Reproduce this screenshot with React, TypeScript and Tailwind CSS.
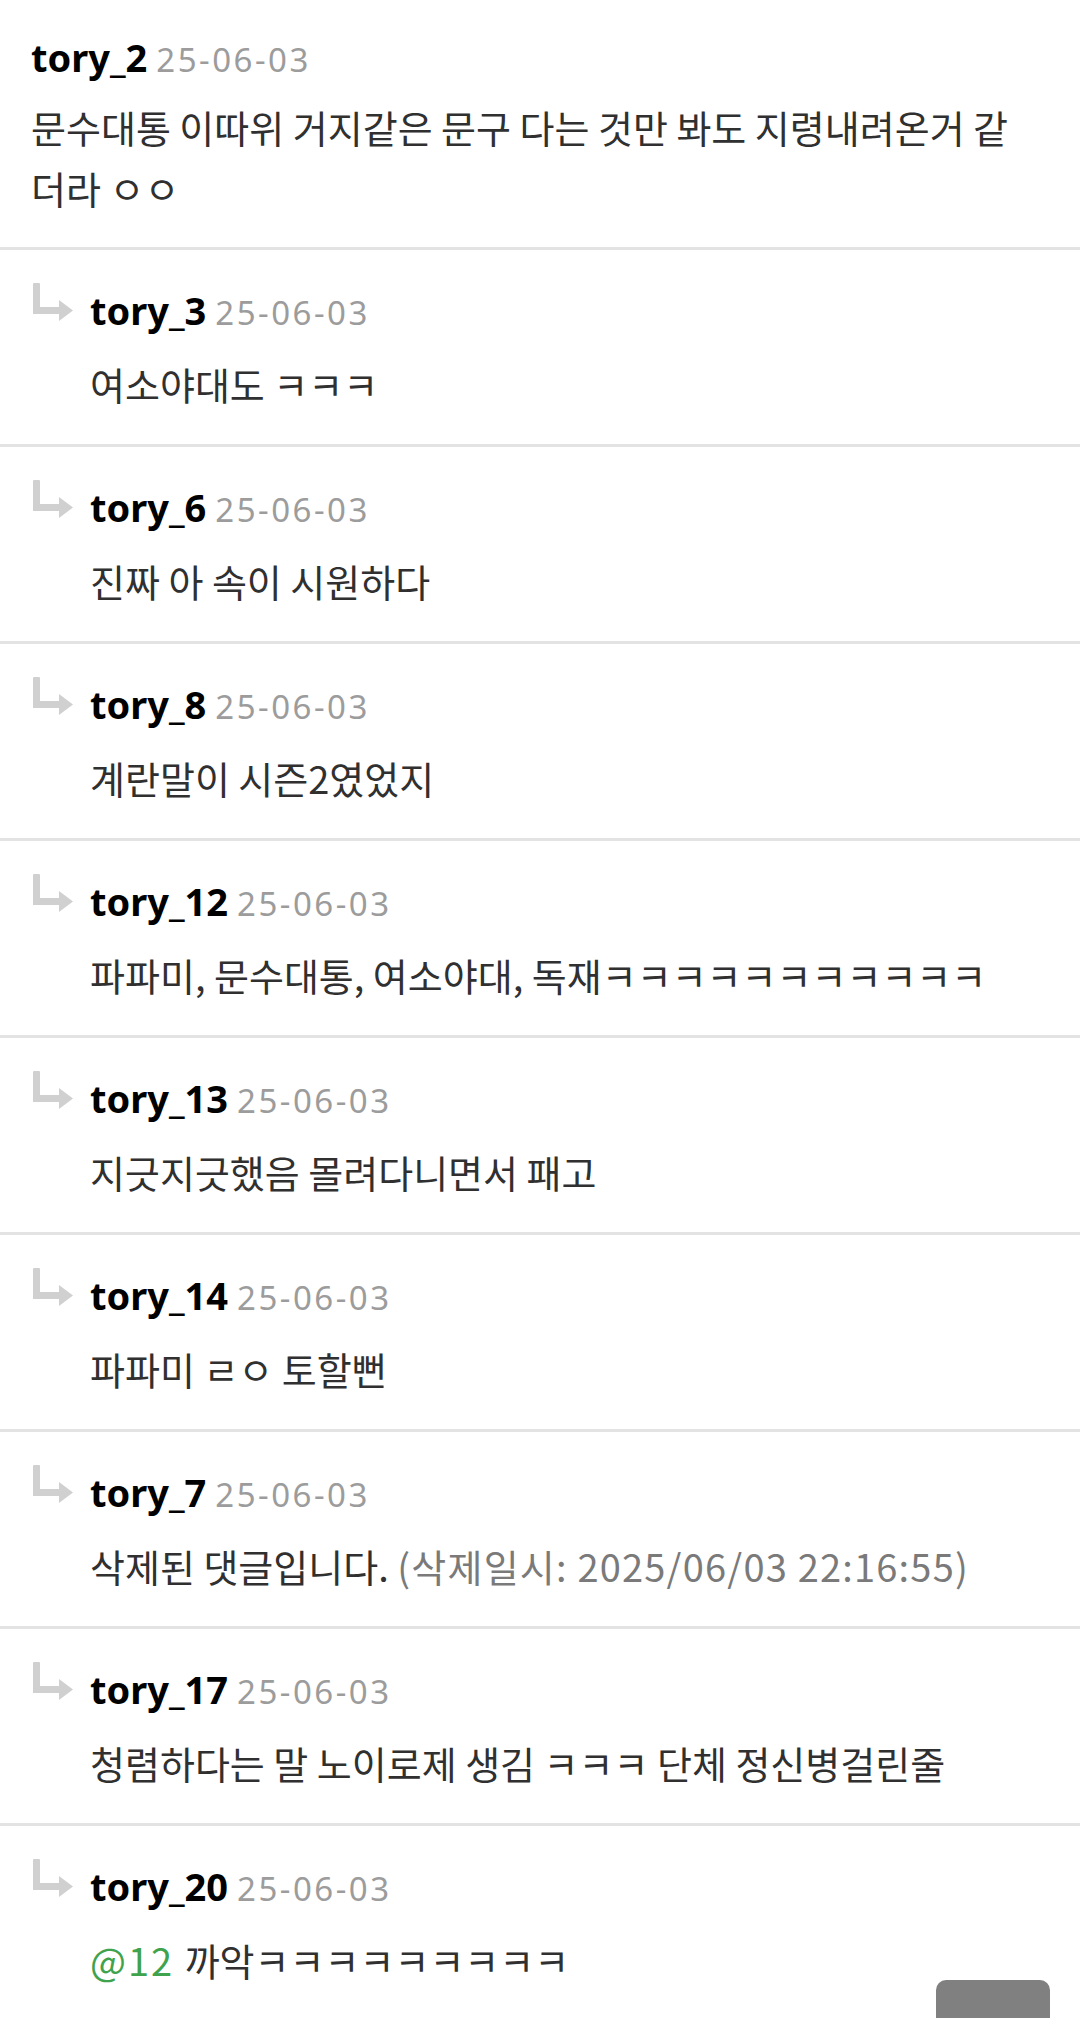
import * as React from "react"

const comments = [
  { name: "tory_3", text: "여소야대도 ㅋㅋㅋ" },
  { name: "tory_6", text: "진짜 아 속이 시원하다" },
  { name: "tory_8", text: "계란말이 시즌2였었지" },
  { name: "tory_12", text: "파파미, 문수대통, 여소야대, 독재ㅋㅋㅋㅋㅋㅋㅋㅋㅋㅋㅋ" },
  { name: "tory_13", text: "지긋지긋했음 몰려다니면서 패고" },
  { name: "tory_14", text: "파파미 ㄹㅇ 토할뻔" },
  { name: "tory_7", deleted: "2025/06/03 22:16:55" },
  { name: "tory_17", text: "청렴하다는 말 노이로제 생김 ㅋㅋㅋ 단체 정신병걸린줄" },
  { name: "tory_20", mention: "@12", text: "까악ㅋㅋㅋㅋㅋㅋㅋㅋㅋ" },
]

function ReplyArrow() {
  return (
    <svg width="40" height="38" viewBox="0 0 40 38" className="block">
      <rect x="0" y="0" width="7" height="31" rx="1" fill="#d0d0d0" />
      <rect x="0" y="24" width="28" height="7" fill="#d0d0d0" />
      <polygon points="26,17 40,27.5 26,38" fill="#d0d0d0" />
    </svg>
  )
}

function Header({ name }: { name: string }) {
  return (
    <div
      className="text-[38px] leading-[40px] whitespace-nowrap"
      style={{ fontFamily: '"Noto Sans", sans-serif' }}
    >
      <span className="font-bold text-black">{name}</span>
      <span className="ml-[9px] text-[33px] text-[#9c9c9c] tracking-[2.5px]">25-06-03</span>
    </div>
  )
}

const body = "text-[38px] leading-[61px] text-[#303030]"

export default function App() {
  return (
    <div
      className="relative h-[2018px] overflow-hidden bg-white"
      style={{ fontFamily: '"Noto Sans CJK KR", "Noto Sans", sans-serif' }}
    >
      {/* original comment */}
      <div className="border-b-[3px] border-[#e3e3e3] pl-[31px] pr-[31px] pt-[37px] pb-[29px]">
        <Header name="tory_2" />
        <p className={`mt-[16px] ${body}`}>
          문수대통 이따위 거지같은 문구 다는 것만 봐도 지령내려온거 같<br />더라 ㅇㅇ
        </p>
      </div>

      {/* replies */}
      {comments.map((c) => (
        <div
          key={c.name}
          className="flex border-b-[3px] border-[#e3e3e3] pl-[33px] pr-[20px] pt-[33px] pb-[30px]"
        >
          <div className="w-[57px] shrink-0">
            <ReplyArrow />
          </div>
          <div className="flex-1 pt-[7px]">
            <Header name={c.name} />
            <p className={`mt-[20px] ${body}`}>
              {c.deleted ? (
                <>
                  삭제된 댓글입니다.{" "}
                  <span className="text-[#7a7a7a] tracking-[1.2px]">(삭제일시: {c.deleted})</span>
                </>
              ) : (
                <>
                  {c.mention && (
                    <span className="text-[#3fa34d] tracking-[2px]">{c.mention} </span>
                  )}
                  {c.text}
                </>
              )}
            </p>
          </div>
        </div>
      ))}

      {/* scroll-top button */}
      <div className="absolute top-[1980px] left-[936px] h-[60px] w-[114px] rounded-t-[10px] bg-[#808080]" />
    </div>
  )
}
